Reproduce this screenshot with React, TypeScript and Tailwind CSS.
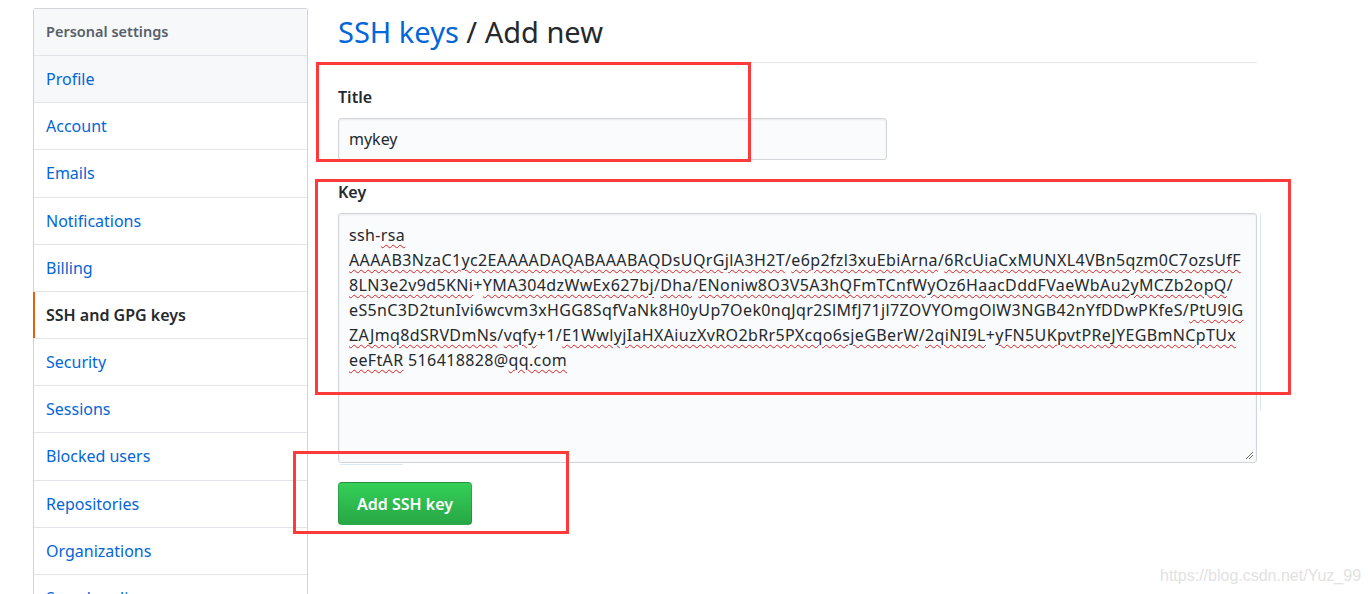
import React from "react";

const FONT = { fontFamily: '"Noto Sans", "Open Sans", Arial, sans-serif' };

const navItems = [
  "Profile",
  "Account",
  "Emails",
  "Notifications",
  "Billing",
  "SSH and GPG keys",
  "Security",
  "Sessions",
  "Blocked users",
  "Repositories",
  "Organizations",
  "Saved replies",
];

function U({ children }: { children: React.ReactNode }) {
  return (
    <span className="underline decoration-wavy decoration-[#e02020] decoration-1 underline-offset-[3px]">
      {children}
    </span>
  );
}

function Sidebar() {
  return (
    <nav className="w-[275px] shrink-0 rounded-t-[3px] border border-b-0 border-[#d1d5da] bg-white">
      <div className="flex h-[46px] items-center bg-[#f6f8fa] px-[12px] text-[14.5px] font-semibold text-[#586069]">
        Personal settings
      </div>
      {navItems.map((item, i) => {
        const active = item === "SSH and GPG keys";
        const hovered = i === 0;
        return (
          <div
            key={item}
            className={
              "relative flex h-[47.18px] items-center border-t border-[#e1e4e8] px-[12px] text-[16px] " +
              (active ? "font-semibold text-[#24292e]" : "text-[#0366d6]") +
              (hovered ? " bg-[#f6f8fa]" : "")
            }
          >
            {active && (
              <span className="absolute left-[-1px] top-0 h-full w-[2px] bg-[#e36209]" />
            )}
            {item}
          </div>
        );
      })}
    </nav>
  );
}

function KeyText() {
  return (
    <div className="whitespace-nowrap text-[16px] leading-[25px] tracking-[0.37px] text-[#24292e]">
      <div>
        ssh-<U>rsa</U>
      </div>
      <div>
        <U>AAAAB3NzaC1yc2EAAAADAQABAAABAQDsUQrGjlA3H2T</U>/<U>e6p2fzl3xuEbiArna</U>/<U>6RcUiaCxMUNXL4VBn5qzm0C7ozsUfF</U>
      </div>
      <div>
        <U>8LN3e2v9d5KNi</U>+<U>YMA304dzWwEx627bj</U>/<U>Dha</U>/<U>ENoniw8O3V5A3hQFmTCnfWyOz6HaacDddFVaeWbAu2yMCZb2opQ</U>/
      </div>
      <div>
        eS5nC3D2tunIvi6wcvm3xHGG8SqfVaNk8H0yUp7Oek0nqJqr2SlMfJ71jl7ZOVYOmgOlW3NGB42nYfDDwPKfeS/<U>PtU9lG</U>
      </div>
      <div>
        <U>ZAJmq8dSRVDmNs</U>/<U>vqfy</U>+1/<U>E1WwlyjIaHXAiuzXvRO2bRr5PXcqo6sjeGBerW</U>/<U>2qiNI9L</U>+<U>yFN5UKpvtPReJYEGBmNCpTUx</U>
      </div>
      <div>
        <U>eeFtAR</U> 516418828@<U>qq.com</U>
      </div>
    </div>
  );
}

function MainForm() {
  return (
    <main className="w-[919px] shrink-0 pt-[4px]">
      <div className="border-b border-[#e1e4e8] pb-[10px] text-[29px] leading-[40px] text-[#24292e]">
        <span className="text-[#0366d6]">SSH keys</span> / Add new
      </div>

      <div className="mt-[22px]">
        <div className="text-[16px] font-semibold leading-[24px] text-[#24292e]">Title</div>
        <div className="mt-[9px] flex h-[42px] w-[549px] items-center rounded-[3px] border border-[#d1d5da] bg-[#fafbfc] px-[10px] text-[16px] text-[#24292e] shadow-[inset_0_1px_2px_rgba(27,31,35,0.075)]">
          mykey
        </div>
      </div>

      <div className="mt-[20px]">
        <div className="text-[16px] font-semibold leading-[24px] text-[#24292e]">Key</div>
        <div className="relative mt-[9px] h-[250px] w-full rounded-[3px] border border-[#d1d5da] bg-[#fafbfc] px-[10px] pt-[9px] shadow-[inset_0_1px_2px_rgba(27,31,35,0.075)]">
          <KeyText />
          <svg
            className="absolute bottom-[2px] right-[2px]"
            width="10"
            height="10"
            viewBox="0 0 10 10"
          >
            <path d="M9 2 L2 9 M9 5 L5 9" stroke="#6a6a6a" strokeWidth="1" fill="none" />
          </svg>
        </div>
      </div>

      <button className="mt-[19px] h-[43px] w-[134px] rounded-[4px] border border-[rgba(27,31,35,0.2)] bg-gradient-to-b from-[#34d058] to-[#28a745] text-[16px] font-semibold text-white">
        Add SSH key
      </button>
    </main>
  );
}

export default function App() {
  return (
    <div className="relative h-[594px] w-[1368px] overflow-hidden bg-white" style={FONT}>
      <div className="flex gap-[30px] pl-[33px] pt-[8px]">
        <Sidebar />
        <MainForm />
      </div>

      {/* faint focus-ring remnants beside the key field */}
      <div className="pointer-events-none absolute left-[1260px] top-[213px] h-[198px] w-px bg-[#dbe9f7]" />
      <div className="pointer-events-none absolute left-[340px] top-[464px] h-px w-[63px] bg-[#dbe9f7]" />

      {/* red callout frames */}
      <div className="pointer-events-none absolute left-[316px] top-[62px] h-[100px] w-[435px] border-[3px] border-[#ff3a3a]" />
      <div className="pointer-events-none absolute left-[315px] top-[179px] h-[216px] w-[976px] border-[3px] border-[#ff3a3a]" />
      <div className="pointer-events-none absolute left-[293px] top-[451px] h-[83px] w-[276px] border-[3px] border-[#ff3a3a]" />

      <div
        className="pointer-events-none absolute left-[1160px] top-[566px] text-[16px] leading-[20px] text-[#e2e2e2]"
        style={{ fontFamily: '"Liberation Sans", Arial, sans-serif' }}
      >
        https://blog.csdn.net/Yuz_99
      </div>
    </div>
  );
}
